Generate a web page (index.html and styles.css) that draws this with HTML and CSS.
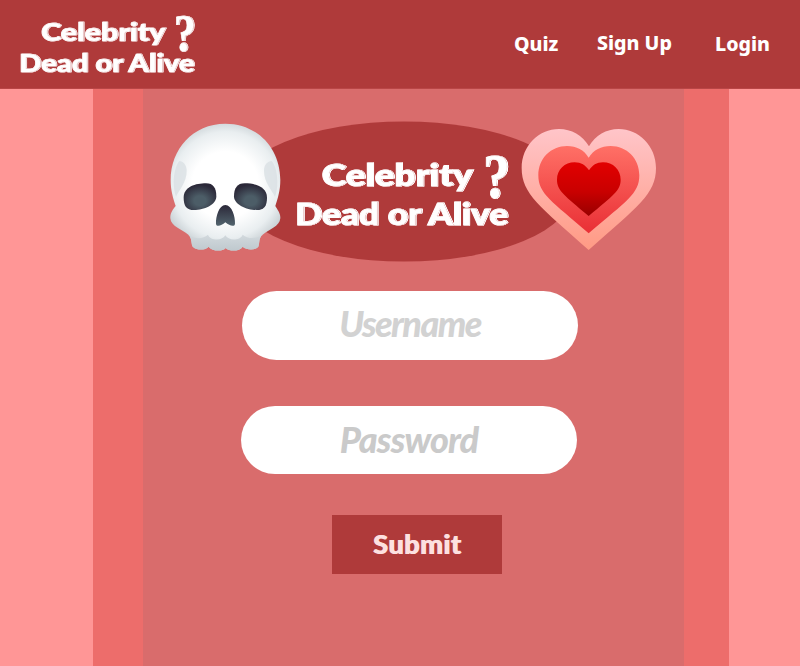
FILE: index.html
```html
<!DOCTYPE html>
<html lang="en">
<head>
<meta charset="utf-8">
<title>Celebrity Dead or Alive</title>
<link rel="stylesheet" href="styles.css">
</head>
<body>
<header class="header">
  <svg class="logo" viewBox="290 150 226 80" role="img">
    <g class="wordmark">
      <text x="321.5" y="186" font-size="31" textLength="151" lengthAdjust="spacingAndGlyphs">Celebrity</text>
      <text class="mark" x="483" y="198" font-size="64" textLength="27" lengthAdjust="spacingAndGlyphs">?</text>
      <text x="295" y="224.5" font-size="31" textLength="213" lengthAdjust="spacingAndGlyphs">Dead or Alive</text>
    </g>
  </svg>
  <nav class="nav">
    <a class="quiz">Quiz</a>
    <a class="signup">Sign Up</a>
    <a class="login">Login</a>
  </nav>
</header>
<div class="frame">
  <main class="panel">
    <svg class="hero" viewBox="143 89 541 202">
      <defs>
        <radialGradient id="bone" gradientUnits="userSpaceOnUse" cx="226" cy="225" r="200">
          <stop offset="0.5" stop-color="#ffffff"/><stop offset="0.8" stop-color="#e9eef0"/><stop offset="1" stop-color="#c6ced2"/>
        </radialGradient>
        <radialGradient id="socket" cy="0.65" r="0.6"><stop offset="0.3" stop-color="#4c5d67"/><stop offset="1" stop-color="#2b2838"/></radialGradient>
        <linearGradient id="nose" x2="0" y2="1"><stop offset="0" stop-color="#2b2838"/><stop offset="1" stop-color="#52646e"/></linearGradient>
        <linearGradient id="teeth" x2="0" y2="1"><stop offset="0" stop-color="#d2d9dd"/><stop offset="1" stop-color="#bfc9ce"/></linearGradient>
        <linearGradient id="outer" x2="0" y2="1"><stop offset="0" stop-color="#ffc5c9"/><stop offset="1" stop-color="#ff9a84"/></linearGradient>
        <linearGradient id="middle" x2="0" y2="1"><stop offset="0" stop-color="#ff7066"/><stop offset="1" stop-color="#e92f35"/></linearGradient>
        <linearGradient id="inner" x2="0" y2="1"><stop offset="0" stop-color="#e20000"/><stop offset="0.55" stop-color="#c90000"/><stop offset="1" stop-color="#980000"/></linearGradient>
      </defs>
      <ellipse cx="404" cy="191.5" rx="169" ry="70" fill="#af3a3a"/>
      <g class="wordmark">
        <text x="321.5" y="186" font-size="31" textLength="151" lengthAdjust="spacingAndGlyphs">Celebrity</text>
        <text class="mark" x="483" y="198" font-size="64" textLength="27" lengthAdjust="spacingAndGlyphs">?</text>
        <text x="295" y="224.5" font-size="31" textLength="213" lengthAdjust="spacingAndGlyphs">Dead or Alive</text>
      </g>
      <g transform="translate(150 110) scale(.3333)">
        <path fill="url(#bone)" d="M226 41C128 41 62 118 62 210C62 242 69 263 77 288C70 297 60 309 61 325C63 350 96 358 115 374C128 386 122 403 129 411C142 422 166 421 176 410C186 424 217 426 227 414C239 426 270 424 278 410C290 421 316 421 325 410C330 399 325 384 338 374C357 358 389 350 391 325C392 309 382 299 376 288C384 263 391 242 391 210C391 118 325 41 226 41Z"/>
        <path fill="url(#teeth)" d="M115 374C138 389 158 387 174 374C181 393 218 393 226 376C235 393 270 393 278 374C294 387 316 388 338 374C325 384 330 399 325 410C316 421 290 421 278 410C270 424 239 426 227 414C217 426 186 424 176 410C166 421 142 422 129 411C122 403 128 386 115 374Z"/>
        <path fill="#d9e0e4" opacity=".8" d="M88 153C70 175 66 229 78 260C88 239 111 217 110 180C109 164 99 153 88 153ZM365 153C384 175 387 229 375 260C365 239 341 217 342 180C343 164 353 153 365 153Z"/>
        <path fill="url(#socket)" d="M101 263C101 230 137 220 168 220C190 220 199 234 199 260C198 284 162 300 132 300C109 300 101 287 101 263Z"/>
        <path fill="url(#socket)" d="M351 263C351 230 315 220 284 220C262 220 252 234 252 260C253 284 290 300 320 300C343 300 351 287 351 263Z"/>
        <path fill="url(#nose)" d="M226 285C207 285 197 320 198 341C199 352 214 348 226 337C239 348 254 352 255 341C256 320 246 285 226 285Z"/>
      </g>
      <g transform="translate(510 115) scale(.3333)">
        <path fill="url(#outer)" d="M237 94C218 61 184 42 147 42C86 42 35 93 35 159C35 237 90 275 236 405C383 275 438 237 438 159C438 93 386 42 326 42C289 42 256 61 237 94Z"/>
        <path fill="url(#middle)" d="M236 128C222 105 200 93 171 93C123 93 85 130 85 181C85 236 124 258 236 355C350 258 388 236 388 181C388 130 350 93 302 93C273 93 251 105 236 128Z"/>
        <path fill="url(#inner)" d="M237 166C227 151 213 142 194 142C164 142 141 164 141 194C141 226 162 240 236 303C311 240 332 226 332 194C332 164 309 142 279 142C260 142 247 151 237 166Z"/>
      </g>
    </svg>
    <form class="form">
      <input class="field username" type="text" placeholder="Username" aria-label="Username">
      <input class="field password" type="password" placeholder="Password" aria-label="Password">
      <button class="submit" type="button"><span>Submit</span></button>
    </form>
  </main>
</div>
</body>
</html>
```
FILE: styles.css
```css
* { box-sizing: border-box; }

body {
  margin: 0;
  height: 666px;
  overflow: hidden;
  background: #ff9696;
  font-family: "Noto Sans", sans-serif;
}

.header {
  display: flex;
  justify-content: space-between;
  height: 89px;
  padding: 11px 30px 0 15px;
  background: #af3a3a;
  border-bottom: 1px solid #b94646;
}

.logo { width: 186px; height: 66px; overflow: visible; }

.wordmark {
  fill: #fff;
  stroke: #fff;
  stroke-width: 0.9px;
  font-family: Lato, sans-serif;
  font-weight: 900;
  filter: drop-shadow(0.7px 0 0 #af3a3a) drop-shadow(1.3px 0 0 #fff);
}

.mark { font-family: "Liberation Serif", serif; font-weight: 700; }

.nav {
  display: flex;
  padding-top: 19px;
  color: #fff;
  font-size: 19.6px;
  font-weight: 800;
  line-height: 28px;
}

.quiz { width: 83px; }
.signup { width: 118px; margin-top: -1px; }
.login { width: 55px; }

.frame {
  width: 635.5px;
  height: 577px;
  margin-left: 93px;
  padding-left: 50px;
  background: #ed6d6b;
}

.panel { width: 541px; height: 577px; background: #d96c6c; }

.hero { display: block; width: 541px; height: 202px; }

.form { display: flex; flex-direction: column; align-items: flex-start; }

.field {
  width: 336px;
  height: 68.5px;
  padding: 0 0 4px;
  border: 0;
  border-radius: 35px;
  background: #fff;
  text-align: center;
  font: italic 900 36px Lato, sans-serif;
  letter-spacing: -1.6px;
}

.field::placeholder { color: #d2d2d2; opacity: 1; }
.username { margin-left: 99px; }
.password { margin: 46px 0 0 98px; letter-spacing: -0.9px; padding-bottom: 2px; }
.password::placeholder { color: #cacaca; }

.submit {
  width: 170px;
  height: 59.5px;
  margin: 40.5px 0 0 189px;
  padding: 0 0 2px;
  border: 0;
  background: #af3a3a;
  color: #fde0e0;
  font: 900 27px Lato, sans-serif;
  letter-spacing: 0.5px;
  text-shadow: 1px 0 0 #fde0e0;
}
```
